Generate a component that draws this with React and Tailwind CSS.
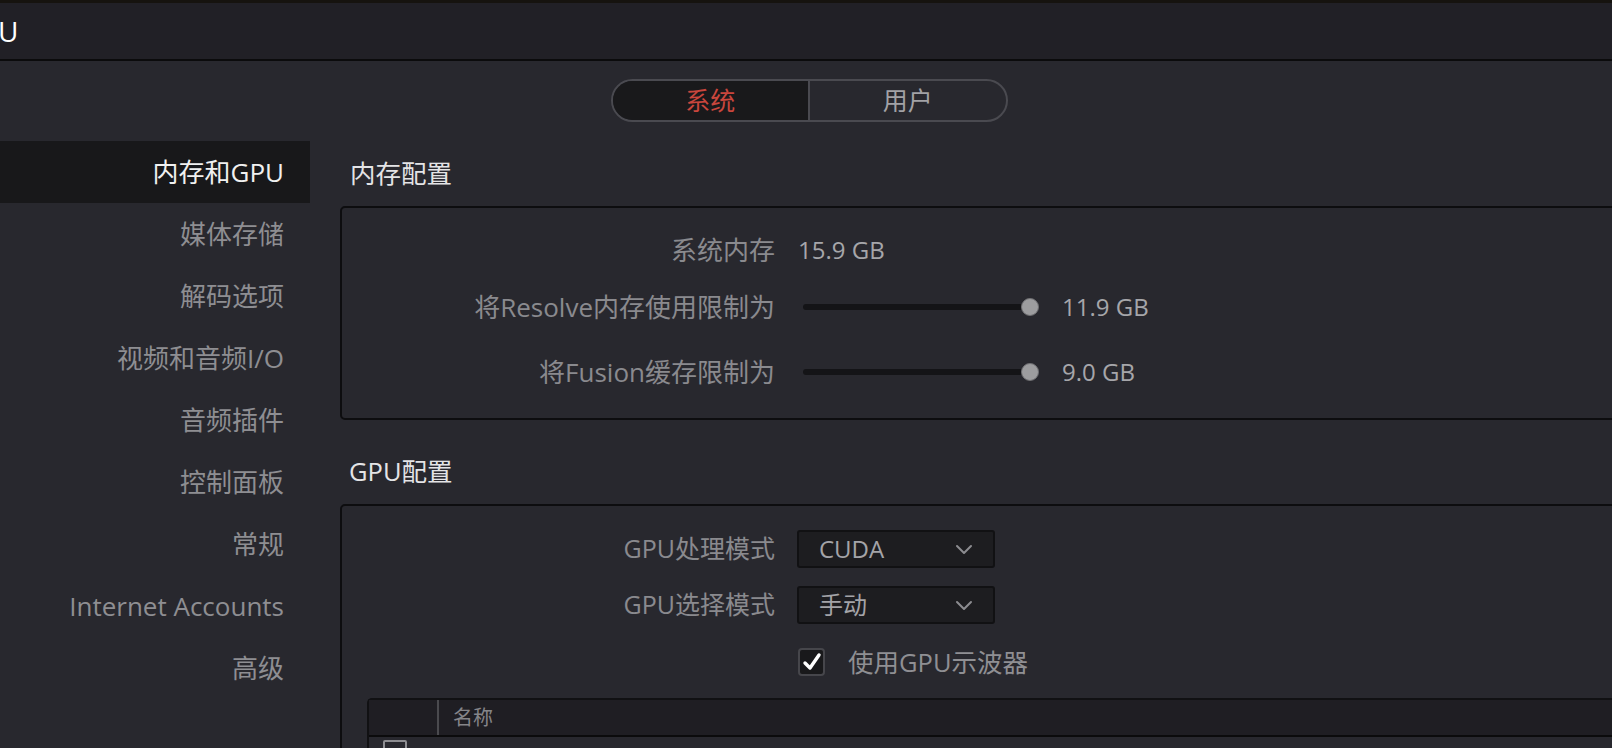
import React from "react";

const FONT = "font-['Open_Sans','Noto_Sans_CJK_SC',sans-serif]";

const NAV = [
  "内存和GPU",
  "媒体存储",
  "解码选项",
  "视频和音频I/O",
  "音频插件",
  "控制面板",
  "常规",
  "Internet Accounts",
  "高级",
];

const Chevron = () => (
  <svg width="18" height="11" viewBox="0 0 18 11" fill="none">
    <polyline
      points="2,2 9,9 16,2"
      stroke="#8c8c90"
      strokeWidth="2"
      strokeLinecap="round"
      strokeLinejoin="round"
    />
  </svg>
);

const Slider = ({ value }) => (
  <div className="relative h-[18px] w-[238px] ml-[26px]">
    <div className="absolute left-[2px] right-[10px] top-[6px] h-[6px] rounded-full bg-[#141417]" />
    <div className="absolute right-0 top-0 h-[18px] w-[18px] rounded-full bg-[#9d9d9f] border border-[#6f6f72]" />
    <span className="absolute left-[261px] top-1/2 -translate-y-1/2 whitespace-nowrap text-[24px] text-[#a6a6aa]">
      {value}
    </span>
  </div>
);

const Label = ({ children, size = "text-[26px]" }) => (
  <div
    className={`w-[433px] shrink-0 text-right ${size} text-[#8a8a8e] whitespace-nowrap`}
  >
    {children}
  </div>
);

const Select = ({ value }) => (
  <div className="ml-[22px] flex h-[38px] w-[198px] items-center justify-between rounded-[3px] border-2 border-[#111113] bg-[#1d1d20] pl-[20px] pr-[20px]">
    <span className="text-[24px] text-[#a4a4a8] leading-none">{value}</span>
    <Chevron />
  </div>
);

export default function App() {
  return (
    <div
      className={`${FONT} relative h-[748px] w-[1612px] overflow-hidden bg-[#28282e]`}
    >
      {/* window top edge */}
      <div className="h-[3px] bg-[#16130f]" />

      {/* title bar */}
      <div className="flex h-[58px] items-center border-b-2 border-[#0b0b0c] bg-[#212026]">
        <span className="ml-[-2px] text-[28px] leading-none text-white">U</span>
      </div>

      {/* system / user switch */}
      <div className="mt-[18px] flex justify-center">
        <div className="ml-[6px] flex h-[43px] w-[397px] overflow-hidden rounded-full border-2 border-[#4a4a50]">
          <div className="flex flex-1 items-center justify-center bg-[#19191b] text-[25px] text-[#c9463d]">
            系统
          </div>
          <div className="flex flex-1 items-center justify-center border-l-2 border-[#4a4a50] text-[25px] text-[#a2a2a6]">
            用户
          </div>
        </div>
      </div>

      <div className="mt-[19px] flex">
        {/* sidebar */}
        <div className="w-[310px] shrink-0">
          {NAV.map((item, i) => (
            <div
              key={item}
              className={`flex h-[62px] items-center justify-end pr-[26px] text-[26px] whitespace-nowrap ${
                i === 0 ? "bg-[#18181a] text-[#f0f0f0]" : "text-[#8e8e92]"
              }`}
            >
              {item}
            </div>
          ))}
        </div>

        {/* settings */}
        <div className="flex-1 pl-[30px]">
          <div className="flex h-[65px] items-center pl-[10px] text-[25.5px] text-[#e4e4e6]">
            内存配置
          </div>
          <div className="w-[1400px] rounded-[5px] border-2 border-[#0d0d0f] pt-[22px] pb-[26px]">
            <div className="flex h-[40px] items-center">
              <Label>系统内存</Label>
              <span className="ml-[23px] text-[24px] text-[#a6a6aa]">15.9 GB</span>
            </div>
            <div className="mt-[17px] flex h-[40px] items-center">
              <Label>将Resolve内存使用限制为</Label>
              <Slider value="11.9 GB" />
            </div>
            <div className="mt-[25px] flex h-[40px] items-center">
              <Label>将Fusion缓存限制为</Label>
              <Slider value="9.0 GB" />
            </div>
          </div>

          <div className="mt-[19px] flex h-[65px] items-center pl-[9px] text-[25.5px] text-[#e4e4e6]">
            GPU配置
          </div>
          <div className="w-[1400px] h-[300px] rounded-[5px] border-2 border-[#0d0d0f] pt-[24px]">
            <div className="flex h-[38px] items-center">
              <Label size="text-[25px]">GPU处理模式</Label>
              <Select value="CUDA" />
            </div>
            <div className="mt-[18px] flex h-[38px] items-center">
              <Label size="text-[25px]">GPU选择模式</Label>
              <Select value="手动" />
            </div>
            <div className="mt-[24px] flex h-[28px] items-center">
              <div className="w-[433px] shrink-0" />
              <div className="ml-[23px] flex h-[28px] w-[27px] items-center justify-center rounded-[4px] border-2 border-[#46464b] bg-[#19191b]">
                <svg width="20" height="20" viewBox="0 0 20 20">
                  <path
                    d="M3 11 L8 16 L17 3"
                    fill="none"
                    stroke="#ffffff"
                    strokeWidth="3.4"
                    strokeLinecap="round"
                    strokeLinejoin="round"
                  />
                </svg>
              </div>
              <span className="ml-[23px] text-[25.5px] text-[#8f8f93] whitespace-nowrap">
                使用GPU示波器
              </span>
            </div>

            {/* GPU list */}
            <div className="ml-[25px] mt-[22px] rounded-tl-[5px] border-l-2 border-t-2 border-[#111113]">
              <div className="flex h-[37px] items-center border-b-2 border-[#0b0b0c] bg-[#1f1e23]">
                <div className="w-[68px] shrink-0" />
                <div className="h-[35px] w-[2px] bg-[#4a4a4e]" />
                <span className="pl-[14px] text-[20px] text-[#858589]">名称</span>
              </div>
              <div className="pl-[14px] pt-[3px]">
                <div className="h-[24px] w-[24px] rounded-[2px] border-2 border-[#8e8e92]" />
              </div>
            </div>
          </div>
        </div>
      </div>
    </div>
  );
}
